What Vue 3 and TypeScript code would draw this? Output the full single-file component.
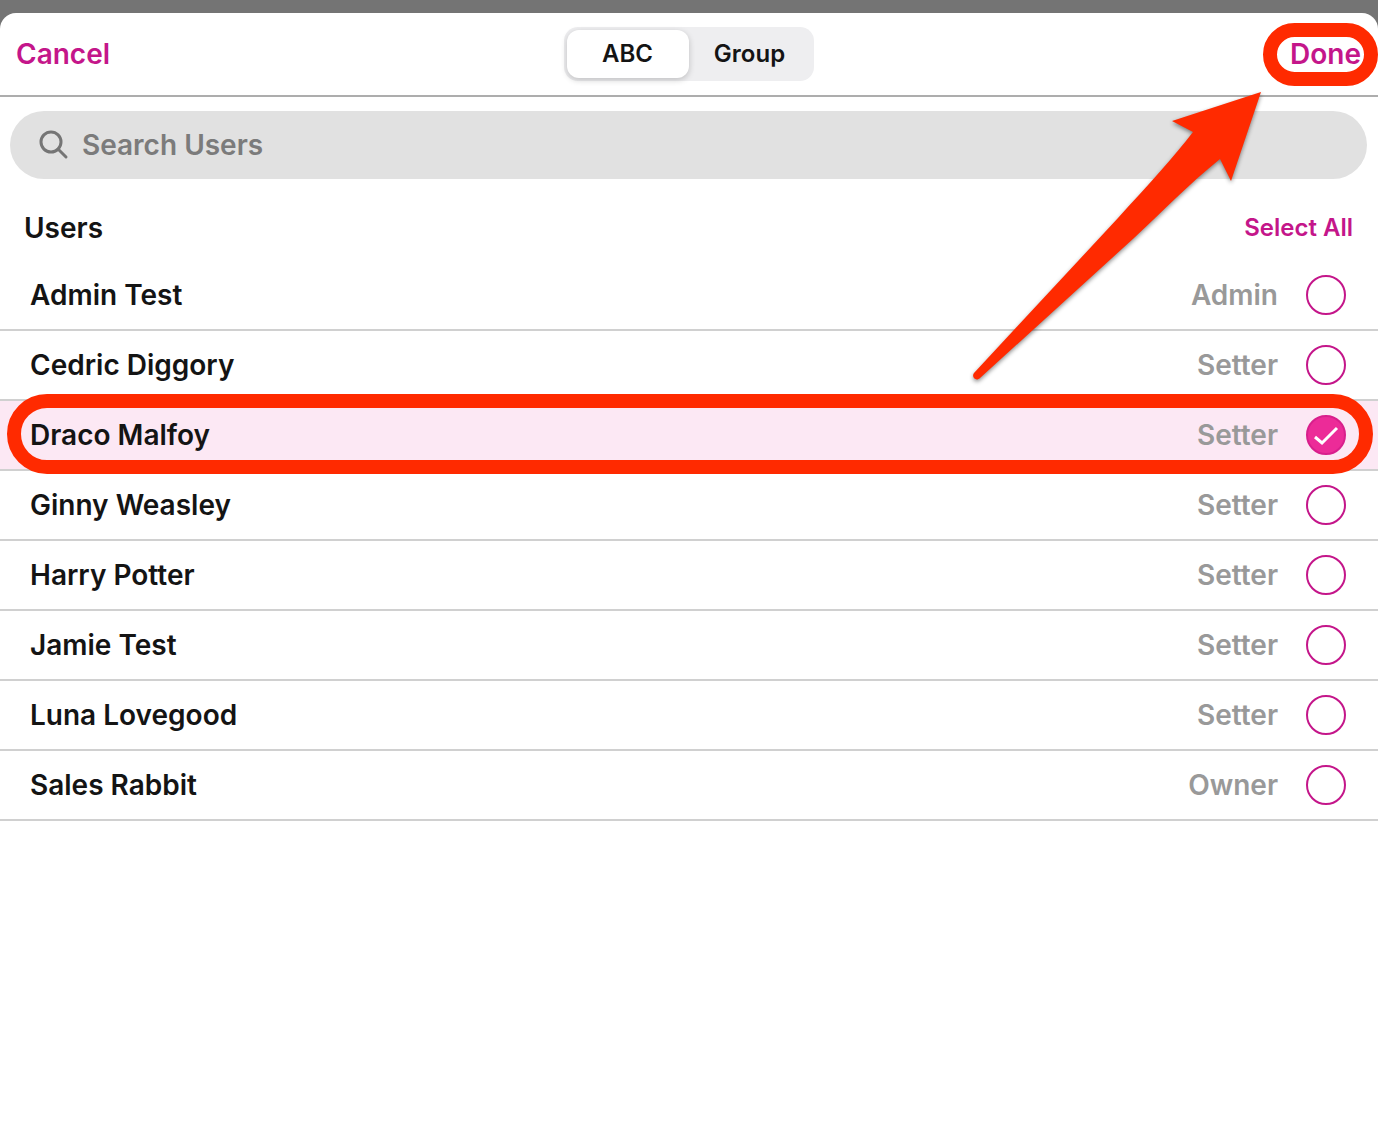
<script setup lang="ts">
import { computed, ref } from 'vue'

interface User {
  id: number
  name: string
  role: string
  selected: boolean
}

const view = ref<'abc' | 'group'>('abc')
const query = ref('')
const users = ref<User[]>([
  { id: 1, name: 'Admin Test', role: 'Admin', selected: false },
  { id: 2, name: 'Cedric Diggory', role: 'Setter', selected: false },
  { id: 3, name: 'Draco Malfoy', role: 'Setter', selected: true },
  { id: 4, name: 'Ginny Weasley', role: 'Setter', selected: false },
  { id: 5, name: 'Harry Potter', role: 'Setter', selected: false },
  { id: 6, name: 'Jamie Test', role: 'Setter', selected: false },
  { id: 7, name: 'Luna Lovegood', role: 'Setter', selected: false },
  { id: 8, name: 'Sales Rabbit', role: 'Owner', selected: false },
])

const visibleUsers = computed(() =>
  users.value.filter((u) => u.name.toLowerCase().includes(query.value.toLowerCase())),
)

function selectAll() {
  users.value.forEach((u) => (u.selected = true))
}
</script>

<template>
  <div class="backdrop">
    <main class="sheet">
      <header class="bar">
        <div class="side">
          <button type="button" class="action">Cancel</button>
        </div>
        <div class="segments" role="group" aria-label="View">
          <button
            type="button"
            class="segment"
            :class="{ active: view === 'abc' }"
            @click="view = 'abc'"
          >ABC</button>
          <button
            type="button"
            class="segment"
            :class="{ active: view === 'group' }"
            @click="view = 'group'"
          >Group</button>
        </div>
        <div class="side end">
          <button type="button" class="action done">
            Done
            <span class="ring" aria-hidden="true"></span>
            <svg class="arrow" viewBox="0 0 300 300" aria-hidden="true">
              <path
                d="M293 8 L204 37 L225 48 C206 73 180 101 150 134 L6 289 C3 293 8 298 12 294 L166 154 C196 126 222 99 252 75 L263 97 Z"
              />
            </svg>
          </button>
        </div>
      </header>

      <label class="search">
        <svg class="glass" viewBox="0 0 30 30" aria-hidden="true">
          <circle cx="12" cy="12" r="10" />
          <path d="M19 19 L27 27" />
        </svg>
        <input v-model="query" type="search" placeholder="Search Users" aria-label="Search Users" />
      </label>

      <div class="heading">
        <h2>Users</h2>
        <button type="button" class="action small" @click="selectAll">Select All</button>
      </div>

      <ul class="list">
        <li v-for="user in visibleUsers" :key="user.id">
          <label class="row" :class="{ selected: user.selected }">
            <span class="name">{{ user.name }}</span>
            <span class="role">{{ user.role }}</span>
            <span class="check">
              <input v-model="user.selected" type="checkbox" />
              <svg v-if="user.selected" viewBox="0 0 40 40" aria-hidden="true">
                <path d="M9 22 L16 28 L31 13" />
              </svg>
            </span>
            <span v-if="user.selected" class="ring" aria-hidden="true"></span>
          </label>
        </li>
      </ul>
    </main>
  </div>
</template>

<style>
body {
  margin: 0;
  background: #fff;
}
</style>

<style scoped>
.backdrop {
  display: flex;
  flex-direction: column;
  min-height: 100vh;
  box-sizing: border-box;
  padding-top: 13px;
  overflow: hidden;
  background: #747474;
  color: #141414;
  font-family: Inter, 'Liberation Sans', sans-serif;
  font-size: 28px;
  font-weight: 600;
  line-height: 32px;
}

.sheet {
  flex: 1;
  border-radius: 16px 16px 0 0;
  background: #fff;
}

button {
  padding: 0;
  border: 0;
  background: none;
  color: inherit;
  font: inherit;
  cursor: pointer;
}

.bar {
  display: flex;
  align-items: center;
  height: 82px;
  padding: 0 17px 0 16px;
  border-bottom: 2px solid #adadad;
}

.side {
  display: flex;
  flex: 1;
}

.end {
  justify-content: flex-end;
}

.action {
  color: #c4168a;
}

.action.small {
  font-size: 24px;
}

.done {
  position: relative;
}

.ring {
  position: absolute;
  z-index: 1;
  box-sizing: border-box;
  border: 14px solid #ff2a00;
  border-radius: 40px;
  pointer-events: none;
}

.done .ring {
  inset: -15px -17px -16px -27px;
}

.arrow {
  position: absolute;
  z-index: 2;
  top: 46px;
  right: 93px;
  width: 300px;
  height: 300px;
  fill: #ff2a00;
  filter: drop-shadow(0 2px 2px rgba(0, 0, 0, 0.45));
  pointer-events: none;
}

.segments {
  display: flex;
  box-sizing: border-box;
  width: 250px;
  height: 54px;
  padding: 3px;
  border-radius: 14px;
  background: #eeeef0;
}

.segment {
  flex: 1;
  border-radius: 12px;
  font-size: 24px;
}

.segment.active {
  background: #fff;
  box-shadow: 0 2px 6px rgba(0, 0, 0, 0.2);
}

.search {
  display: flex;
  align-items: center;
  gap: 13px;
  height: 68px;
  margin: 14px 11px 0 10px;
  padding: 0 29px;
  border-radius: 34px;
  background: #e1e1e1;
}

.glass {
  width: 30px;
  height: 30px;
  fill: none;
  stroke: #757575;
  stroke-width: 3;
  stroke-linecap: round;
}

.search input {
  flex: 1;
  min-width: 0;
  padding: 0;
  border: 0;
  outline: 0;
  background: none;
  color: #141414;
  font: inherit;
  appearance: none;
}

.search input::placeholder {
  color: #7b7b7b;
  opacity: 1;
}

.heading {
  display: flex;
  align-items: center;
  justify-content: space-between;
  height: 66px;
  padding: 16px 25px 0 24px;
}

h2 {
  margin: 0;
  font-size: inherit;
  font-weight: inherit;
}

.list {
  margin: 0;
  padding: 0;
  list-style: none;
}

.row {
  position: relative;
  display: flex;
  align-items: center;
  height: 68px;
  padding: 0 32px 0 30px;
  border-bottom: 2px solid #d0d0d0;
}

.row.selected {
  background: #fce8f4;
}

.name {
  flex: 1;
}

.role {
  margin-right: 28px;
  color: #999;
}

.row .ring {
  inset: -7px 5px -5px 7px;
}

.check {
  position: relative;
  display: flex;
}

.check input {
  width: 40px;
  height: 40px;
  margin: 0;
  border: 2px solid #c4168a;
  border-radius: 50%;
  background: #fff;
  appearance: none;
}

.check input:checked {
  border-color: #d81f8c;
  background: #ec2b98;
}

.check svg {
  position: absolute;
  inset: 0;
  fill: none;
  stroke: #fff;
  stroke-width: 3;
  pointer-events: none;
}
</style>
